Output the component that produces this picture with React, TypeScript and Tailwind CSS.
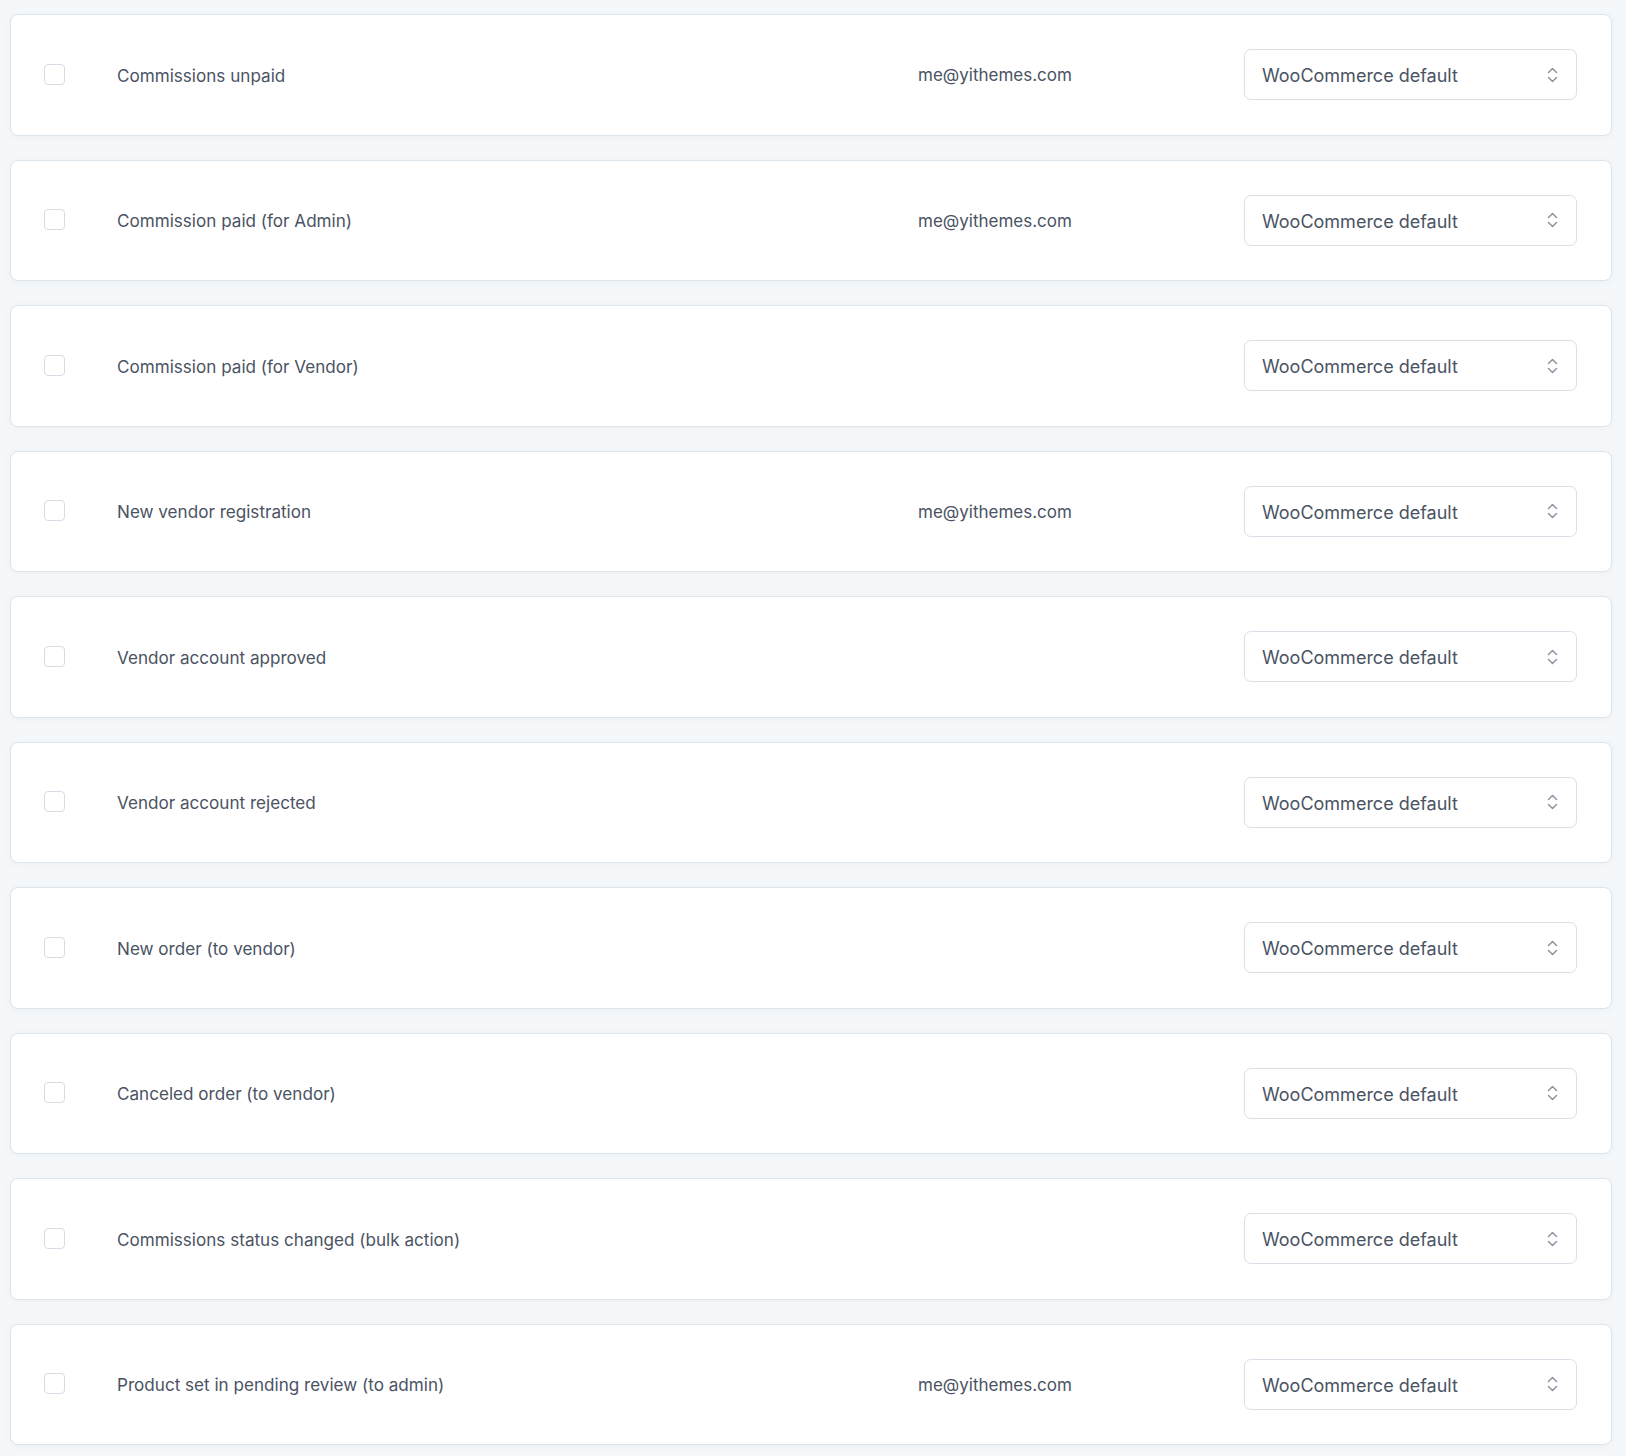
// ============================================================
// Data
// ============================================================

interface EmailRow {
  title: string;
  recipient?: string;
}

const ROWS: EmailRow[] = [
  { title: "Commissions unpaid", recipient: "me@yithemes.com" },
  { title: "Commission paid (for Admin)", recipient: "me@yithemes.com" },
  { title: "Commission paid (for Vendor)" },
  { title: "New vendor registration", recipient: "me@yithemes.com" },
  { title: "Vendor account approved" },
  { title: "Vendor account rejected" },
  { title: "New order (to vendor)" },
  { title: "Canceled order (to vendor)" },
  { title: "Commissions status changed (bulk action)" },
  { title: "Product set in pending review (to admin)", recipient: "me@yithemes.com" },
];

// ============================================================
// Select
// ============================================================

function UpDownIcon() {
  return (
    <svg
      width="11"
      height="18"
      viewBox="0 0 11 18"
      fill="none"
      stroke="#8b94a3"
      strokeWidth="1.5"
      strokeLinecap="round"
      strokeLinejoin="round"
    >
      <path d="M1.5 6.5 5.5 2.5 9.5 6.5" />
      <path d="M1.5 11.5 5.5 15.5 9.5 11.5" />
    </svg>
  );
}

function EmailTypeSelect() {
  return (
    <div className="w-[333px] h-[51px] shrink-0 flex items-center justify-between pl-[17px] pr-[18px] rounded-[7px] border border-[#d9e0e7] bg-white text-[18px] text-[#4a5363]">
      <span className="pt-[2px]">WooCommerce default</span>
      <UpDownIcon />
    </div>
  );
}

// ============================================================
// Row card
// ============================================================

function EmailCard({ row }: { row: EmailRow }) {
  return (
    <div className="h-[121.5px] flex items-center rounded-[8px] border border-[#dde5ec] bg-white shadow-[0_1px_6px_rgba(120,140,160,0.08)] pl-[33px] pr-[34px]">
      <div className="w-[21px] h-[21px] shrink-0 -mt-[1px] rounded-[4px] border border-[#d5dce3] bg-white" />
      <div className="w-[801px] shrink-0 ml-[52px] pt-[2px] text-[17.1px] text-[#4a5363]">
        {row.title}
      </div>
      <div className="flex-1 pt-[2px] text-[17px] text-[#4a5363]">{row.recipient}</div>
      <EmailTypeSelect />
    </div>
  );
}

// ============================================================
// App
// ============================================================

export default function App() {
  return (
    <div
      className="min-h-[1456px] bg-[#f5f8fa] pt-[14px] pl-[10px] pr-[14px] flex flex-col gap-[24px]"
      style={{ fontFamily: "Inter, 'Noto Sans', sans-serif" }}
    >
      {ROWS.map((row) => (
        <EmailCard key={row.title} row={row} />
      ))}
    </div>
  );
}
